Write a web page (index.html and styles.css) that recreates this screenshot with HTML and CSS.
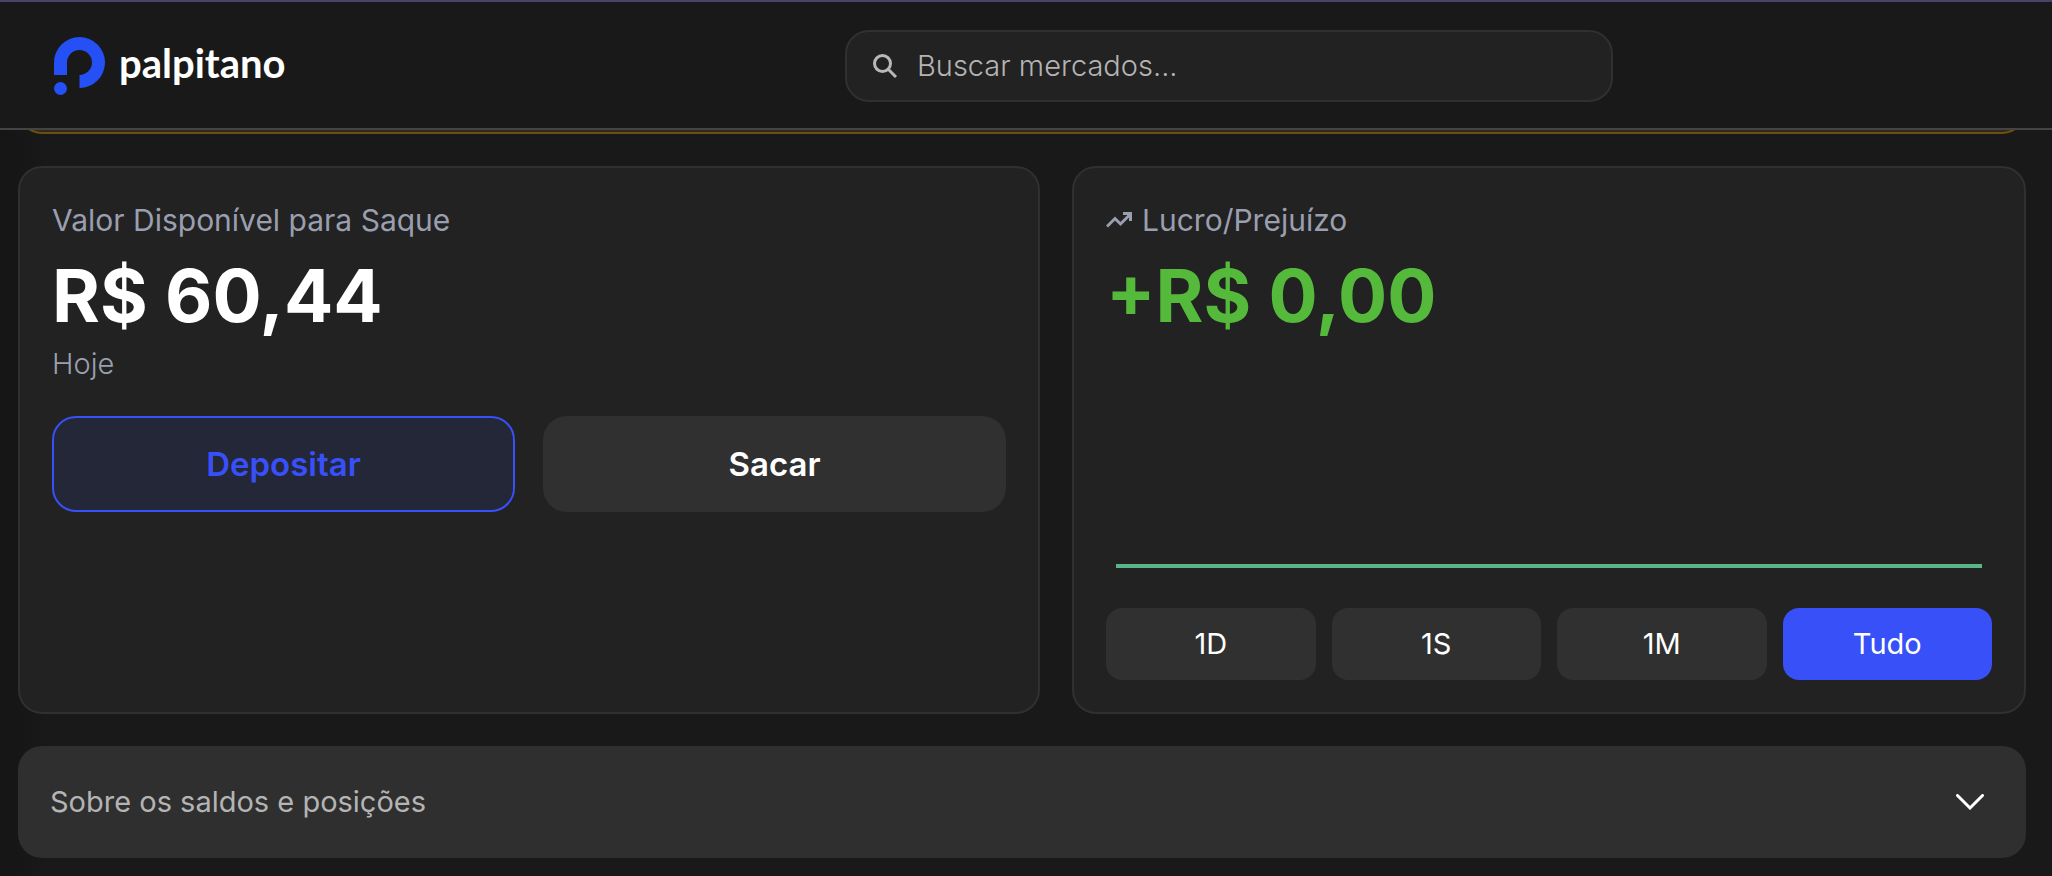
FILE: index.html
```html
<!DOCTYPE html>
<html lang="pt-BR">
  <head>
    <meta charset="utf-8">
    <meta name="viewport" content="width=device-width, initial-scale=1">
    <title>palpitano</title>
    <link rel="stylesheet" href="styles.css">
  </head>
  <body>
    <header class="header">
      <a class="logo" href="#">
        <svg class="logoMark" viewBox="0 0 51 58" aria-hidden="true">
          <path fill="#2450f5" d="M0 38V25.500a25.500 25.500 0 1 1 25.500 25.500V38a12.500 12.500 0 1 0-12.500-12.500V38z"/>
          <circle fill="#2450f5" cx="6.500" cy="51.500" r="6.500"/>
        </svg>
        <span class="logoText">palpitano</span>
      </a>
      <label class="search">
        <svg class="searchIcon" viewBox="0 0 24 24" aria-hidden="true">
          <circle cx="9.500" cy="9.500" r="8"/>
          <path d="M15.500 15.500l7.500 7.500"/>
        </svg>
        <input class="searchInput" type="text" placeholder="Buscar mercados..." aria-label="Buscar mercados">
      </label>
    </header>

    <main class="page">
      <div class="notice"></div>

      <div class="cards">
        <section class="card">
          <h2 class="label">Valor Disponível para Saque</h2>
          <p class="value">R$ 60,44</p>
          <p class="period">Hoje</p>
          <div class="actions">
            <button class="action deposit" type="button">Depositar</button>
            <button class="action" type="button">Sacar</button>
          </div>
        </section>

        <section class="card">
          <h2 class="label">
            <svg class="trend" viewBox="0 0 26 16" aria-hidden="true">
              <path d="M1 14.500L9 6.500L14.500 12L24.500 2M17 1.500H24.500V9"/>
            </svg>
            Lucro/Prejuízo
          </h2>
          <p class="value profit">+R$ 0,00</p>
          <div class="chart">
            <svg viewBox="0 0 100 240" preserveAspectRatio="none" aria-hidden="true">
              <path d="M0 230H100"/>
            </svg>
          </div>
          <div class="ranges">
            <button class="range" type="button">1D</button>
            <button class="range" type="button">1S</button>
            <button class="range" type="button">1M</button>
            <button class="range active" type="button">Tudo</button>
          </div>
        </section>
      </div>

      <button class="about" type="button" aria-expanded="false">
        <span>Sobre os saldos e posições</span>
        <svg class="chevron" viewBox="0 0 28 16" aria-hidden="true">
          <path d="M1.500 1.500L14 14L26.500 1.500"/>
        </svg>
      </button>
    </main>
  </body>
</html>
```
FILE: styles.css
```css
* { box-sizing: border-box; }
body { margin: 0; background: #191919 linear-gradient(90deg, #151515, #191919 48px); color: #fff; font-family: Inter, "Open Sans", sans-serif; font-size: 29px; line-height: 40px; }
h2, p { margin: 0; font-weight: 400; }
button, input { font: inherit; color: inherit; }
button { border: none; cursor: pointer; }

.header { position: relative; z-index: 1; display: grid; grid-template-columns: 1fr minmax(0, 768px) 0.555fr; align-items: center; padding: 28px 0 26px 54px; background: #191919; border-top: 2px solid #48436a; border-bottom: 2px solid #444; }
.logo { display: flex; align-items: center; gap: 14px; color: #fff; text-decoration: none; }
.logoMark { width: 51px; height: 58px; }
.logoText { padding-bottom: 6px; font-family: Lato, sans-serif; font-size: 40px; font-weight: 700; }

.search { display: flex; align-items: center; gap: 20px; height: 72px; padding: 0 26px; background: #222; border: 2px solid #303030; border-radius: 24px; }
.searchIcon { width: 24px; height: 24px; fill: none; stroke: #b8b8b8; stroke-width: 3; }
.searchInput { flex: 1; min-width: 0; padding: 0; background: none; border: none; outline: none; font-weight: 300; }
.searchInput::placeholder { color: #b4b4b4; opacity: 1; }

.page { padding: 0 26px 18px 18px; }
.notice { height: 52px; margin-top: -48px; background: #2f291c; border: 2px solid #6b4e12; border-radius: 24px; }

.cards { display: grid; grid-template-columns: 1022fr 954fr; gap: 32px; margin: 32px 0; }
.card { padding: 32px; background: #222; border: 2px solid #303030; border-radius: 24px; }
.label { display: flex; align-items: center; gap: 10px; color: #9a9fb0; font-size: 30px; }
.trend { width: 26px; height: 16px; fill: none; stroke: #9a9fb0; stroke-width: 3; }
.value { margin-top: 16px; font-size: 73px; font-weight: 700; line-height: 80px; }
.profit { color: #55b93c; }
.period { margin-top: 8px; color: #9a9fb0; font-weight: 300; }

.actions { display: grid; grid-template-columns: 1fr 1fr; gap: 28px; margin-top: 32px; }
.action { height: 96px; background: #303030; border-radius: 24px; font-size: 33px; font-weight: 600; }
.deposit { background: #242738; border: 2px solid #3850f7; color: #3850f7; }

.chart { height: 240px; margin: 0 10px 32px; }
.chart svg { display: block; width: 100%; height: 100%; }
.chart path { fill: none; stroke: #5ab688; stroke-width: 4; vector-effect: non-scaling-stroke; }

.ranges { display: grid; grid-template-columns: repeat(4, 1fr); gap: 16px; }
.range { height: 72px; padding: 0; background: #303030; border-radius: 16px; }
.active { background: #3850f7; }

.about { display: flex; align-items: center; justify-content: space-between; width: 100%; height: 112px; padding: 0 42px 0 32px; background: #2f2f2f; border-radius: 24px; color: #b4b4b4; }
.chevron { width: 28px; height: 16px; fill: none; stroke: #fff; stroke-width: 3; stroke-linecap: round; }
```
